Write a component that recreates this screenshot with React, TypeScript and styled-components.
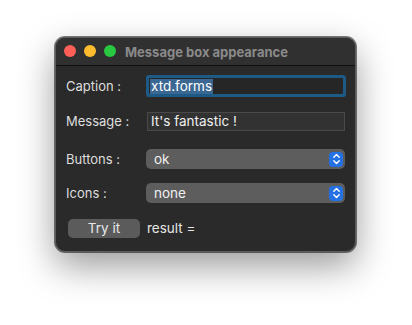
import React from 'react';
import styled, { createGlobalStyle } from 'styled-components';

const GlobalStyle = createGlobalStyle`
  html, body {
    margin: 0;
    padding: 0;
    background: #ffffff;
  }

  body {
    font-family: Inter, "Liberation Sans", sans-serif;
    -webkit-font-smoothing: antialiased;
  }
`;

const Desktop = styled.div`
  width: 412px;
  height: 325px;
  padding: 37px 0 0 55px;
  box-sizing: border-box;
`;

const Window = styled.div`
  width: 301px;
  height: 215px;
  box-sizing: border-box;
  border-radius: 10px;
  border: 1px solid #5c5c5c;
  background: #2a2a2a;
  box-shadow: 0 14px 36px rgba(0, 0, 0, 0.4), 0 0 0 1px rgba(0, 0, 0, 0.5);
  overflow: hidden;
  display: flex;
  flex-direction: column;
`;

const TitleBar = styled.div`
  position: relative;
  height: 27px;
  flex: none;
  display: flex;
  align-items: center;
  justify-content: center;
  background: #303030;
  border-bottom: 1px solid #101010;
`;

const Lights = styled.div`
  position: absolute;
  left: 8px;
  top: 7px;
  display: flex;
  gap: 8px;
`;

const Light = styled.span<{ $color: string }>`
  width: 12px;
  height: 12px;
  border-radius: 50%;
  background: ${(p) => p.$color};
`;

const Title = styled.div`
  font-size: 13px;
  font-weight: 700;
  color: #8a8a8a;
  padding-left: 2px;
`;

const Form = styled.div`
  display: flex;
  flex-direction: column;
  padding: 0 10px 0 10px;
`;

const Row = styled.div<{ $top: number }>`
  display: flex;
  align-items: center;
  height: 22px;
  margin-top: ${(p) => p.$top}px;
`;

const Label = styled.div`
  width: 80px;
  flex: none;
  font-size: 13px;
  color: #dedede;
`;

const FocusField = styled.div`
  margin-left: 3px;
  width: 194px;
  height: 16px;
  box-sizing: border-box;
  background: #262626;
  box-shadow: 0 0 0 3px #1d5b86;
  border-radius: 1px;
  display: flex;
  align-items: center;
  padding-left: 1px;
`;

const Selection = styled.span`
  background: #3b6893;
  color: #ffffff;
  font-size: 13.5px;
  line-height: 15px;
  padding: 0 1px;
`;

const TextField = styled.div`
  margin-left: 1px;
  width: 198px;
  height: 19px;
  box-sizing: border-box;
  border: 1px solid #4a4a4a;
  background: #323232;
  color: #f0f0f0;
  font-size: 13.5px;
  display: flex;
  align-items: center;
  padding-left: 3px;
`;

const Combo = styled.div`
  width: 199px;
  height: 20px;
  box-sizing: border-box;
  border-radius: 5px;
  background: #5d5d5d;
  display: flex;
  align-items: center;
  justify-content: space-between;
  padding: 0 2px 0 8px;
  color: #f0f0f0;
  font-size: 13.5px;
`;

const Stepper = styled.div`
  width: 14px;
  height: 15px;
  border-radius: 4px;
  background: #2471e3;
  display: flex;
  align-items: center;
  justify-content: center;
`;

const Button = styled.div`
  margin-left: 2px;
  width: 72px;
  height: 19px;
  border-radius: 5px;
  background: #5b5b5b;
  color: #e8e8e8;
  font-size: 13.5px;
  display: flex;
  align-items: center;
  justify-content: center;
`;

const Result = styled.div`
  margin-left: 7px;
  font-size: 13.5px;
  color: #e6e6e6;
`;

const Chevrons = () => (
  <svg width="9" height="12" viewBox="0 0 9 12" fill="none">
    <path d="M1.8 4.2 L4.5 1.5 L7.2 4.2" stroke="#fff" strokeWidth="1.4" strokeLinecap="round" strokeLinejoin="round" />
    <path d="M1.8 7.8 L4.5 10.5 L7.2 7.8" stroke="#fff" strokeWidth="1.4" strokeLinecap="round" strokeLinejoin="round" />
  </svg>
);

const App = () => {
  return (
    <Desktop>
      <GlobalStyle />
      <Window>
        <TitleBar>
          <Lights>
            <Light $color="#fe5f57" />
            <Light $color="#febc2e" />
            <Light $color="#28c840" />
          </Lights>
          <Title>Message box appearance</Title>
        </TitleBar>
        <Form>
          <Row $top={9}>
            <Label>Caption :</Label>
            <FocusField>
              <Selection>xtd.forms</Selection>
            </FocusField>
          </Row>
          <Row $top={13}>
            <Label>Message :</Label>
            <TextField>It's fantastic !</TextField>
          </Row>
          <Row $top={16}>
            <Label>Buttons :</Label>
            <Combo>
              ok
              <Stepper>
                <Chevrons />
              </Stepper>
            </Combo>
          </Row>
          <Row $top={12}>
            <Label>Icons :</Label>
            <Combo>
              none
              <Stepper>
                <Chevrons />
              </Stepper>
            </Combo>
          </Row>
          <Row $top={13}>
            <Button>Try it</Button>
            <Result>result =</Result>
          </Row>
        </Form>
      </Window>
    </Desktop>
  );
};

export default App;
